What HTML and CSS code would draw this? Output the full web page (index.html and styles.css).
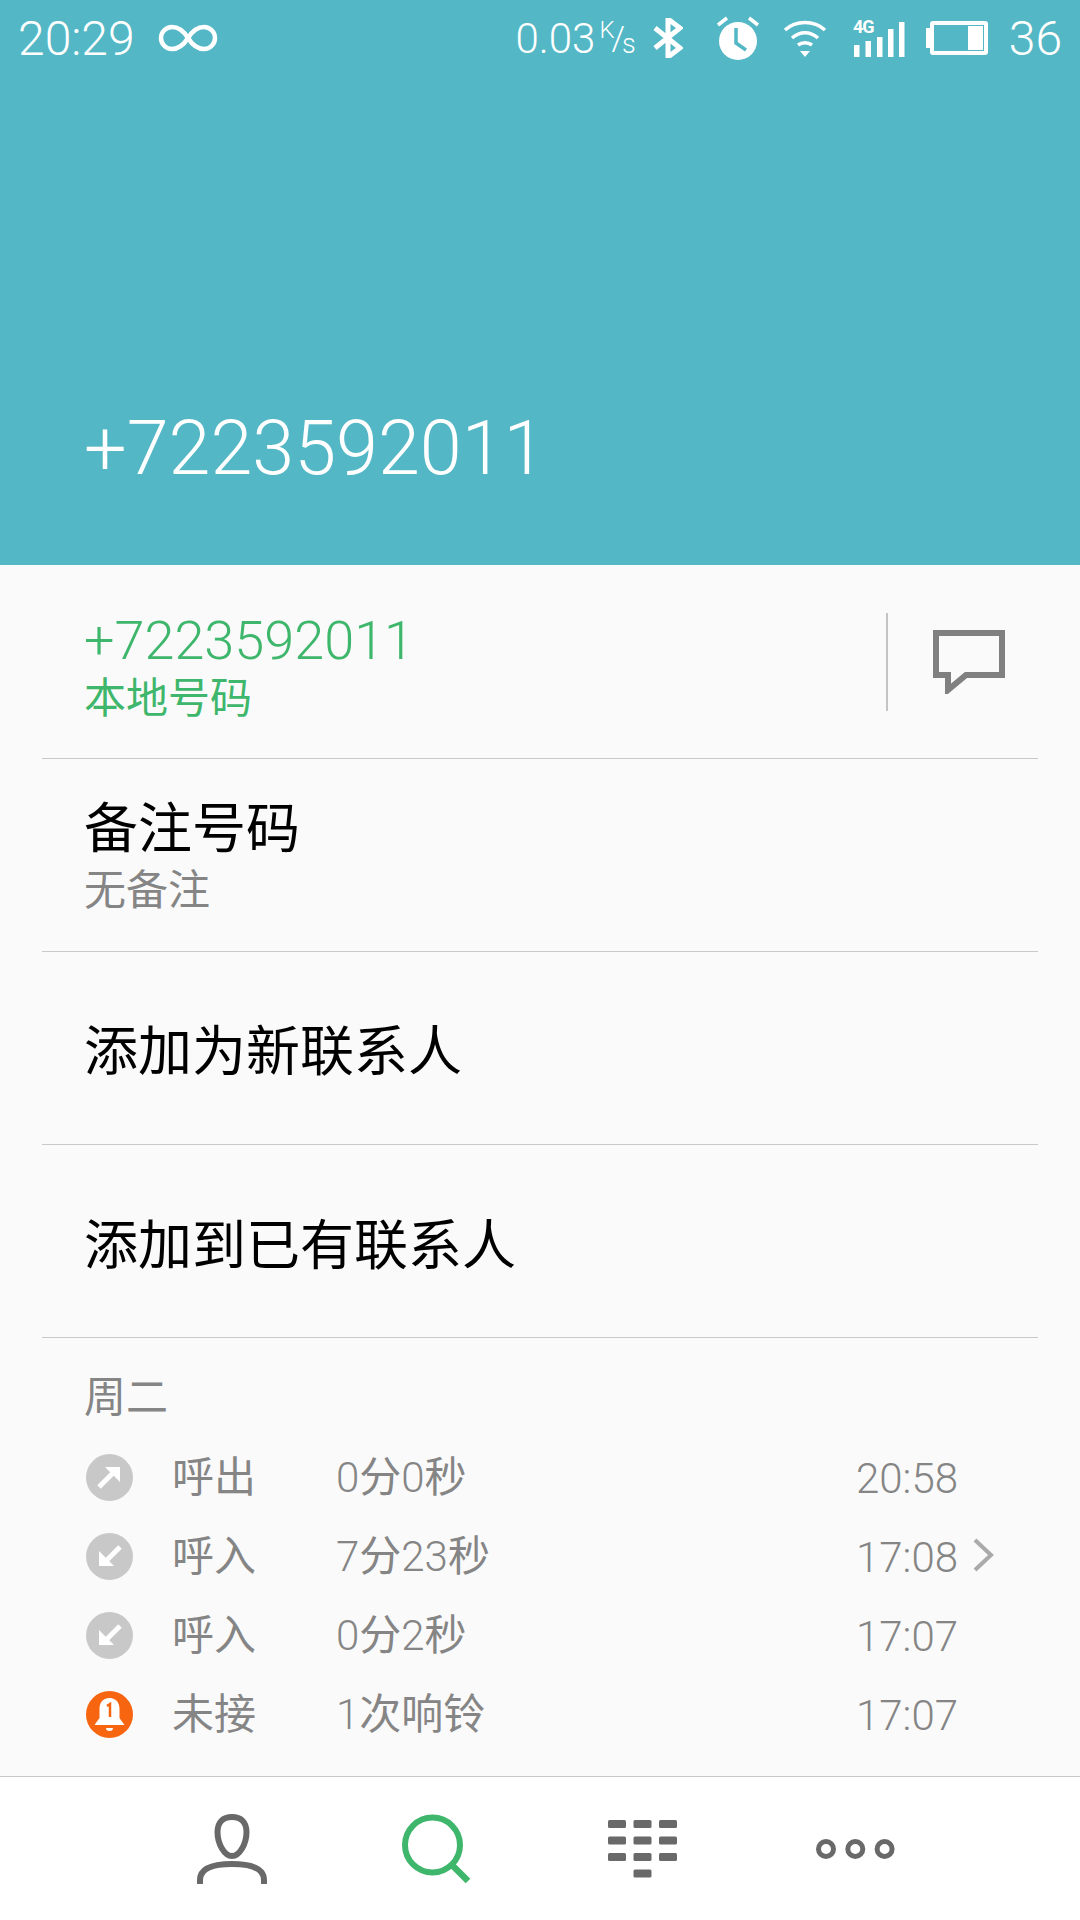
FILE: index.html
```html
<!DOCTYPE html>
<html lang="zh-CN">
<head>
  <meta charset="UTF-8">
  <meta name="viewport" content="width=device-width, initial-scale=1.0">
  <title>+7223592011</title>
  <link rel="stylesheet" href="styles.css">
</head>
<body>
  <div class="phone">
    <!-- Header with status bar and number -->
    <header class="top">
      <div class="status-bar">
        <div class="status-left">
          <span class="clock">20:29</span>
          <svg class="icon-loop" width="60" height="34" viewBox="0 0 60 34"><path d="M30 17C25 9 20 6 14 6a11 11 0 0 0 0 22c6 0 11-3 16-11s10-11 16-11a11 11 0 0 1 0 22c-6 0-11-3-16-11" fill="none" stroke="#fff" stroke-width="4.5"/></svg>
        </div>
        <div class="status-right">
          <span class="speed">0.03</span>
          <span class="speed-unit"><span class="unit-k">K</span><span class="unit-slash">/</span><span class="unit-s">s</span></span>
          <svg class="icon-bt" width="30" height="40" viewBox="0 0 30 40"><path d="M2 10l25 20-12 9V1l12 9L2 30" fill="none" stroke="#fff" stroke-width="5"/></svg>
          <svg class="icon-alarm" width="44" height="46" viewBox="0 0 44 46"><path d="M2 10l9-7M42 10l-9-7" stroke="#fff" stroke-width="3.5" fill="none"/><circle cx="22" cy="26" r="19" fill="#fff"/><path d="M20 13v15l10 7" fill="none" stroke="#53b7c5" stroke-width="3.5"/></svg>
          <svg class="icon-wifi" width="44" height="40" viewBox="0 0 44 40"><path d="M2 12C13 2 31 2 42 12M9 20c8-7 18-7 26 0M15 27c4-3 10-3 14 0" fill="none" stroke="#fff" stroke-width="3.5"/><path d="M17 33h10l-5 6z" fill="#fff"/></svg>
          <svg class="icon-signal" width="52" height="42" viewBox="0 0 52 42"><text x="0" y="16" class="net-type">4G</text><path d="M1 28h5.500v12H1zM12.500 24h5.500v16h-5.500zM24 20h5.500v20H24zM35 12h5.500v28H35zM46 5h5.500v35H46z" fill="#fff"/></svg>
          <svg class="icon-battery" width="62" height="36" viewBox="0 0 62 36"><path d="M0 8h4v20H0z" fill="#fff"/><rect x="6" y="3" width="54" height="30" rx="1" fill="none" stroke="#fff" stroke-width="4"/><path d="M42 6h15v24H42z" fill="#fff"/></svg>
          <span class="level">36</span>
        </div>
      </div>
      <h1 class="title">+7223592011</h1>
    </header>

    <main class="content">
      <!-- Number row -->
      <div class="row row-number">
        <div class="row-text">
          <div class="number">+7223592011</div>
          <div class="place">本地号码</div>
        </div>
        <div class="msg-box">
          <svg width="72" height="64" viewBox="0 0 72 64"><path d="M3 3h66v42H33L15 60V45H3z" fill="none" stroke="#808080" stroke-width="6"/></svg>
        </div>
      </div>
      <div class="row row-note">
        <div class="row-label">备注号码</div>
        <div class="row-sub">无备注</div>
      </div>
      <div class="row row-action"><div class="row-label">添加为新联系人</div></div>
      <div class="row row-action"><div class="row-label">添加到已有联系人</div></div>

      <!-- Call log -->
      <section class="calls">
        <div class="day">周二</div>
        <ul class="call-list">
          <li class="call">
            <svg class="call-icon" width="47" height="47" viewBox="0 0 47 47"><circle cx="23.500" cy="23.500" r="23.500" fill="#c8c8c8"/><path d="M13 33l15-15" stroke="#fff" stroke-width="5"/><path d="M19 13h15v15z" fill="#fff"/></svg>
            <span class="call-type">呼出</span>
            <span class="call-length"><span class="digits">0</span>分<span class="digits">0</span>秒</span>
            <span class="call-time">20:58</span>
          </li>
          <li class="call">
            <svg class="call-icon" width="47" height="47" viewBox="0 0 47 47"><circle cx="23.500" cy="23.500" r="23.500" fill="#c8c8c8"/><path d="M34 14L20 28" stroke="#fff" stroke-width="5"/><path d="M13 18v15h15z" fill="#fff"/></svg>
            <span class="call-type">呼入</span>
            <span class="call-length"><span class="digits">7</span>分<span class="digits">23</span>秒</span>
            <span class="call-time">17:08</span>
            <svg class="chevron" width="22" height="34" viewBox="0 0 22 34"><path d="M2 2l16 15L2 32" fill="none" stroke="#aaa" stroke-width="4"/></svg>
          </li>
          <li class="call">
            <svg class="call-icon" width="47" height="47" viewBox="0 0 47 47"><circle cx="23.500" cy="23.500" r="23.500" fill="#c8c8c8"/><path d="M34 14L20 28" stroke="#fff" stroke-width="5"/><path d="M13 18v15h15z" fill="#fff"/></svg>
            <span class="call-type">呼入</span>
            <span class="call-length"><span class="digits">0</span>分<span class="digits">2</span>秒</span>
            <span class="call-time">17:07</span>
          </li>
          <li class="call">
            <svg class="call-icon" width="47" height="47" viewBox="0 0 47 47"><circle cx="23.500" cy="23.500" r="23.500" fill="#f76511"/><path d="M23.500 7c-7 0-10 5-10 11v9l-5 7h30l-5-7v-9c0-6-3-11-10-11z" fill="#fff"/><path d="M20 37h7a3.500 3 0 0 1-7 0z" fill="#fff"/><path d="M21 15l3-2v13" fill="none" stroke="#f76511" stroke-width="2.500"/></svg>
            <span class="call-type">未接</span>
            <span class="call-length"><span class="digits">1</span>次响铃</span>
            <span class="call-time">17:07</span>
          </li>
        </ul>
      </section>
    </main>

    <!-- Bottom tabs -->
    <nav class="tabs">
      <svg width="70" height="70" viewBox="0 0 70 70"><path d="M35 3c-9 0-14.500 5-14.500 15 0 12 7 24 14.500 24s14.500-12 14.500-24c0-10-5.500-15-14.500-15z" fill="none" stroke="#696969" stroke-width="6"/><path d="M3 70v-4c0-12 13-16 32-16s32 4 32 16v4" fill="none" stroke="#696969" stroke-width="6"/></svg>
      <svg width="71" height="70" viewBox="0 0 71 70"><circle cx="30.500" cy="31" r="27.500" fill="none" stroke="#3eb66b" stroke-width="6"/><path d="M49 50l17 17" stroke="#3eb66b" stroke-width="6.500"/></svg>
      <svg width="70" height="58" viewBox="0 0 70 58"><g fill="#696969"><rect x="0" y="0" width="18" height="8" rx="1.500"/><rect x="25.500" y="0" width="18" height="8" rx="1.500"/><rect x="51" y="0" width="18" height="8" rx="1.500"/><rect x="0" y="16.500" width="18" height="8" rx="1.500"/><rect x="25.500" y="16.500" width="18" height="8" rx="1.500"/><rect x="51" y="16.500" width="18" height="8" rx="1.500"/><rect x="0" y="33" width="18" height="8" rx="1.500"/><rect x="25.500" y="33" width="18" height="8" rx="1.500"/><rect x="51" y="33" width="18" height="8" rx="1.500"/><rect x="25.500" y="49.500" width="18" height="8" rx="1.500"/></g></svg>
      <svg width="84" height="20" viewBox="-3 0 84 20"><g fill="none" stroke="#696969" stroke-width="5"><circle cx="10" cy="10" r="7.500"/><circle cx="39.300" cy="10" r="7.500"/><circle cx="68.600" cy="10" r="7.500"/></g></svg>
    </nav>
  </div>
</body>
</html>
```

FILE: styles.css
```css
* {
  box-sizing: border-box;
}

body {
  margin: 0;
  background-color: #fafafa;
  font-family: Roboto, "Noto Sans CJK SC", sans-serif;
  font-weight: 300;
}

.phone {
  width: 1080px;
  height: 1920px;
  display: flex;
  flex-direction: column;
  overflow: hidden;
}

/* Header */
.top {
  height: 565px;
  background-color: #53b7c5;
  color: #fff;
  display: flex;
  flex-direction: column;
  justify-content: space-between;
}

.status-bar {
  height: 76px;
  padding: 0 18px;
  display: flex;
  justify-content: space-between;
  align-items: center;
}

.status-left,
.status-right {
  display: flex;
  align-items: center;
}

.clock {
  font-size: 48px;
}

.icon-loop {
  margin-left: 23px;
}

.speed {
  font-size: 42px;
}

.speed-unit {
  display: flex;
  align-items: flex-start;
  height: 40px;
  margin-left: 4px;
  line-height: 1;
}

.unit-k {
  font-size: 24px;
}

.unit-slash {
  font-size: 34px;
  margin: 3px -3px 0 -3px;
}

.unit-s {
  font-size: 27px;
  margin-top: 13px;
}

.icon-bt {
  margin-left: 17px;
}

.icon-alarm {
  margin-left: 33px;
}

.icon-wifi {
  margin-left: 23px;
}

.icon-signal {
  margin-left: 26px;
}

.net-type {
  font-family: Roboto, sans-serif;
  font-size: 18px;
  font-weight: 700;
  letter-spacing: -1px;
  fill: #fff;
}

.icon-battery {
  margin-left: 21px;
}

.level {
  font-size: 48px;
  margin-left: 21px;
}

.title {
  margin: 0 0 72px 84px;
  font-size: 75.5px;
  font-weight: 300;
  line-height: 90px;
}

/* Rows */
.content {
  flex: 1;
  padding: 0 42px;
}

.row {
  height: 193px;
  padding: 0 42px;
  border-bottom: 1px solid #c9c9c9;
  display: flex;
  flex-direction: column;
  justify-content: center;
}

.row-number {
  height: 194px;
  flex-direction: row;
  align-items: center;
  justify-content: space-between;
  padding-right: 0;
}

.row-text {
  margin-top: 10px;
}

.number {
  font-size: 54px;
  line-height: 62px;
  color: #3eb66b;
}

.place {
  font-size: 42px;
  line-height: 50px;
  margin-top: 2px;
  color: #3eb66b;
  font-weight: 400;
}

.msg-box {
  width: 152px;
  height: 98px;
  border-left: 2px solid #c4c4c4;
  padding-left: 45px;
  display: flex;
  align-items: center;
}

.row-label {
  font-size: 54px;
  line-height: 68px;
  color: #000;
  font-weight: 400;
}

.row-note {
  padding-top: 2px;
}

.row-action {
  padding-top: 10px;
}

.row-action:last-of-type {
  padding-top: 12px;
}

.row-sub {
  font-size: 42px;
  line-height: 50px;
  margin-top: 2px;
  color: #858585;
  font-weight: 400;
}

/* Call log */
.calls {
  padding: 0 42px;
}

.day {
  font-size: 42px;
  line-height: 50px;
  margin-top: 35px;
  color: #858585;
  font-weight: 400;
}

.call-list {
  list-style: none;
  margin: 15px 0 0;
  padding: 0;
}

.call {
  height: 79px;
  display: flex;
  align-items: center;
  color: #858585;
  font-size: 42px;
}

.call-icon {
  margin-left: 2px;
}

.call-type {
  margin: 0 0 8px 39px;
  width: 164px;
  font-weight: 400;
}

.call-length {
  width: 520px;
  margin-bottom: 8px;
  font-weight: 400;
}

.digits {
  font-weight: 300;
}

.call-time {
  margin-top: 2px;
}

.chevron {
  margin: 0 0 4px 15px;
}

/* Bottom tabs */
.tabs {
  height: 144px;
  background-color: #fff;
  border-top: 1px solid #c9c9c9;
  display: flex;
  align-items: center;
  gap: 135px;
  padding-left: 197px;
}
```
